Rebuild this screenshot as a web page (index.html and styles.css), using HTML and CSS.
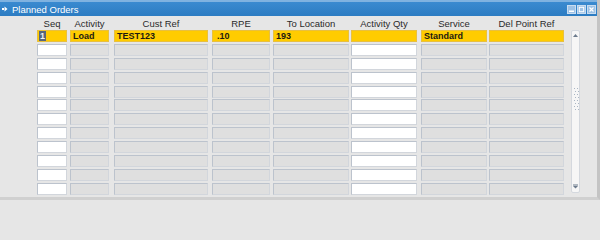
FILE: index.html
```html
<!DOCTYPE html>
<html>
<head>
<meta charset="utf-8">
<link rel="stylesheet" href="styles.css">
</head>
<body>
<div class="window">
  <div class="titlebar">
    <svg class="ticon" width="6" height="6" viewBox="0 0 6 6"><rect x="0" y="2" width="2" height="2" fill="#fff"/><path d="M2.5 0.5 L5.5 3 L2.5 5.5 Z" fill="#fff"/></svg>
    <span class="title">Planned Orders</span>
    <div class="tbuttons">
      <span class="tbtn"><svg width="7" height="7" viewBox="0 0 7 7"><rect x="1" y="4.5" width="5" height="1.5" fill="#fff"/></svg></span>
      <span class="tbtn"><svg width="7" height="7" viewBox="0 0 7 7"><rect x="1.3" y="1.3" width="4.4" height="4.4" fill="none" stroke="#fff" stroke-width="1"/></svg></span>
      <span class="tbtn"><svg width="7" height="7" viewBox="0 0 7 7"><path d="M1.5 1.5 L5.5 5.5 M5.5 1.5 L1.5 5.5" stroke="#fff" stroke-width="1.2"/></svg></span>
    </div>
  </div>
  <div class="body">
    <div class="col c-seq">
      <div class="hdr">Seq</div>
      <div class="f w y"><span class="sel">1</span></div>
      <div class="f w"></div><div class="f w"></div><div class="f w"></div><div class="f w"></div><div class="f w"></div>
      <div class="f w"></div><div class="f w"></div><div class="f w"></div><div class="f w"></div><div class="f w"></div><div class="f w"></div>
    </div>
    <div class="col c-act">
      <div class="hdr">Activity</div>
      <div class="f y">Load</div>
      <div class="f"></div><div class="f"></div><div class="f"></div><div class="f"></div><div class="f"></div>
      <div class="f"></div><div class="f"></div><div class="f"></div><div class="f"></div><div class="f"></div><div class="f"></div>
    </div>
    <div class="col c-cust">
      <div class="hdr">Cust Ref</div>
      <div class="f y">TEST123</div>
      <div class="f"></div><div class="f"></div><div class="f"></div><div class="f"></div><div class="f"></div>
      <div class="f"></div><div class="f"></div><div class="f"></div><div class="f"></div><div class="f"></div><div class="f"></div>
    </div>
    <div class="col c-rpe">
      <div class="hdr">RPE</div>
      <div class="f y rpe">.10</div>
      <div class="f"></div><div class="f"></div><div class="f"></div><div class="f"></div><div class="f"></div>
      <div class="f"></div><div class="f"></div><div class="f"></div><div class="f"></div><div class="f"></div><div class="f"></div>
    </div>
    <div class="col c-loc">
      <div class="hdr">To Location</div>
      <div class="f y">193</div>
      <div class="f"></div><div class="f"></div><div class="f"></div><div class="f"></div><div class="f"></div>
      <div class="f"></div><div class="f"></div><div class="f"></div><div class="f"></div><div class="f"></div><div class="f"></div>
    </div>
    <div class="col c-qty">
      <div class="hdr">Activity Qty</div>
      <div class="f w y"></div>
      <div class="f w"></div><div class="f w"></div><div class="f w"></div><div class="f w"></div><div class="f w"></div>
      <div class="f w"></div><div class="f w"></div><div class="f w"></div><div class="f w"></div><div class="f w"></div><div class="f w"></div>
    </div>
    <div class="col c-svc">
      <div class="hdr">Service</div>
      <div class="f y">Standard</div>
      <div class="f"></div><div class="f"></div><div class="f"></div><div class="f"></div><div class="f"></div>
      <div class="f"></div><div class="f"></div><div class="f"></div><div class="f"></div><div class="f"></div><div class="f"></div>
    </div>
    <div class="col c-del">
      <div class="hdr">Del Point Ref</div>
      <div class="f y"></div>
      <div class="f"></div><div class="f"></div><div class="f"></div><div class="f"></div><div class="f"></div>
      <div class="f"></div><div class="f"></div><div class="f"></div><div class="f"></div><div class="f"></div><div class="f"></div>
    </div>
    <div class="scroll">
      <svg class="arr" width="7" height="5" viewBox="0 0 7 5"><path d="M1 4 L3.5 1 L6 4 Z" fill="#6b7a8c"/></svg>
      <div class="grip">
        <span></span><span></span><span></span><span></span><span></span><span></span><span></span><span></span>
        <span></span><span></span><span></span><span></span><span></span><span></span><span></span><span></span>
      </div>
      <svg class="arr" width="7" height="5" viewBox="0 0 7 5"><rect x="1" y="0.5" width="5" height="1" fill="#6b7a8c"/><path d="M1 2 L3.5 4.5 L6 2 Z" fill="#6b7a8c"/></svg>
    </div>
  </div>
</div>
</body>
</html>
```

FILE: styles.css
```css
html, body {
  margin: 0;
  padding: 0;
  background: #e6e6e6;
}
.window {
  width: 600px;
  height: 200px;
  box-sizing: border-box;
  background: #e6e6e6;
  border-right: 3px solid #c4c4c4;
  border-bottom: 3px solid #d0d0d0;
  font-family: "Liberation Sans", Arial, sans-serif;
  overflow: hidden;
}
.titlebar {
  height: 16px;
  box-sizing: border-box;
  border-top: 2px solid #7fb2e0;
  background: linear-gradient(#3a8ad0, #2c7cc2);
  display: flex;
  align-items: center;
  color: #fff;
}
.ticon {
  margin-left: 2px;
  margin-right: 4px;
}
.title {
  font-size: 9.5px;
  line-height: 13px;
}
.tbuttons {
  margin-left: auto;
  display: flex;
  gap: 1px;
  margin-right: 1px;
}
.tbtn {
  width: 7px;
  height: 7px;
  background: #9dc2e6;
  border: 0.5px solid #c8dcf0;
  display: flex;
}
.body {
  display: flex;
  padding-left: 37px;
}
.col {
  display: flex;
  flex-direction: column;
  gap: 1.9px;
}
.hdr {
  height: 14px;
  font-size: 9.5px;
  line-height: 12px;
  padding-top: 2px;
  box-sizing: border-box;
  margin-bottom: -1.9px;
  text-align: center;
  color: #2a2a2a;
  white-space: nowrap;
}
.f {
  height: 12px;
  box-sizing: border-box;
  background: #dfdfdf;
  border: 1px solid #bcc3cd;
  border-right-color: #d2d6dc;
  border-bottom-color: #d2d6dc;
  font-size: 9px;
  font-weight: bold;
  line-height: 10px;
  padding-left: 2px;
  color: #1e1a10;
  white-space: nowrap;
}
.f.w {
  background: #ffffff;
}
.f.y {
  background: #ffcc00;
  border-color: #e8c040;
}
.rpe {
  padding-left: 4px;
}
.sel {
  display: inline-block;
  background: #56667c;
  color: #f0f0f0;
  padding: 0 1px;
  margin-left: -1px;
  line-height: 10px;
}
.c-seq { width: 30px; margin-right: 3px; }
.c-act { width: 39px; margin-right: 5px; }
.c-cust { width: 94px; margin-right: 4px; }
.c-rpe { width: 58px; margin-right: 3px; }
.c-loc { width: 76px; margin-right: 2px; }
.c-qty { width: 66px; margin-right: 4px; }
.c-svc { width: 66px; margin-right: 2px; }
.c-del { width: 75px; margin-right: 7px; }
.scroll {
  width: 9px;
  height: 163px;
  margin-top: 14px;
  box-sizing: border-box;
  background: #f6f6f6;
  border: 1px solid #d4d8de;
  border-radius: 2px;
  display: flex;
  flex-direction: column;
  align-items: center;
  justify-content: space-between;
  padding: 2px 0 3px;
}
.grip {
  display: grid;
  grid-template-columns: 1px 1px;
  column-gap: 2px;
  row-gap: 2px;
  margin-bottom: 24px;
}
.grip span {
  width: 1px;
  height: 1px;
  background: #aab6c4;
}
.grip span:nth-child(4n+3),
.grip span:nth-child(4n+4) {
  transform: translateX(1px);
}
```
